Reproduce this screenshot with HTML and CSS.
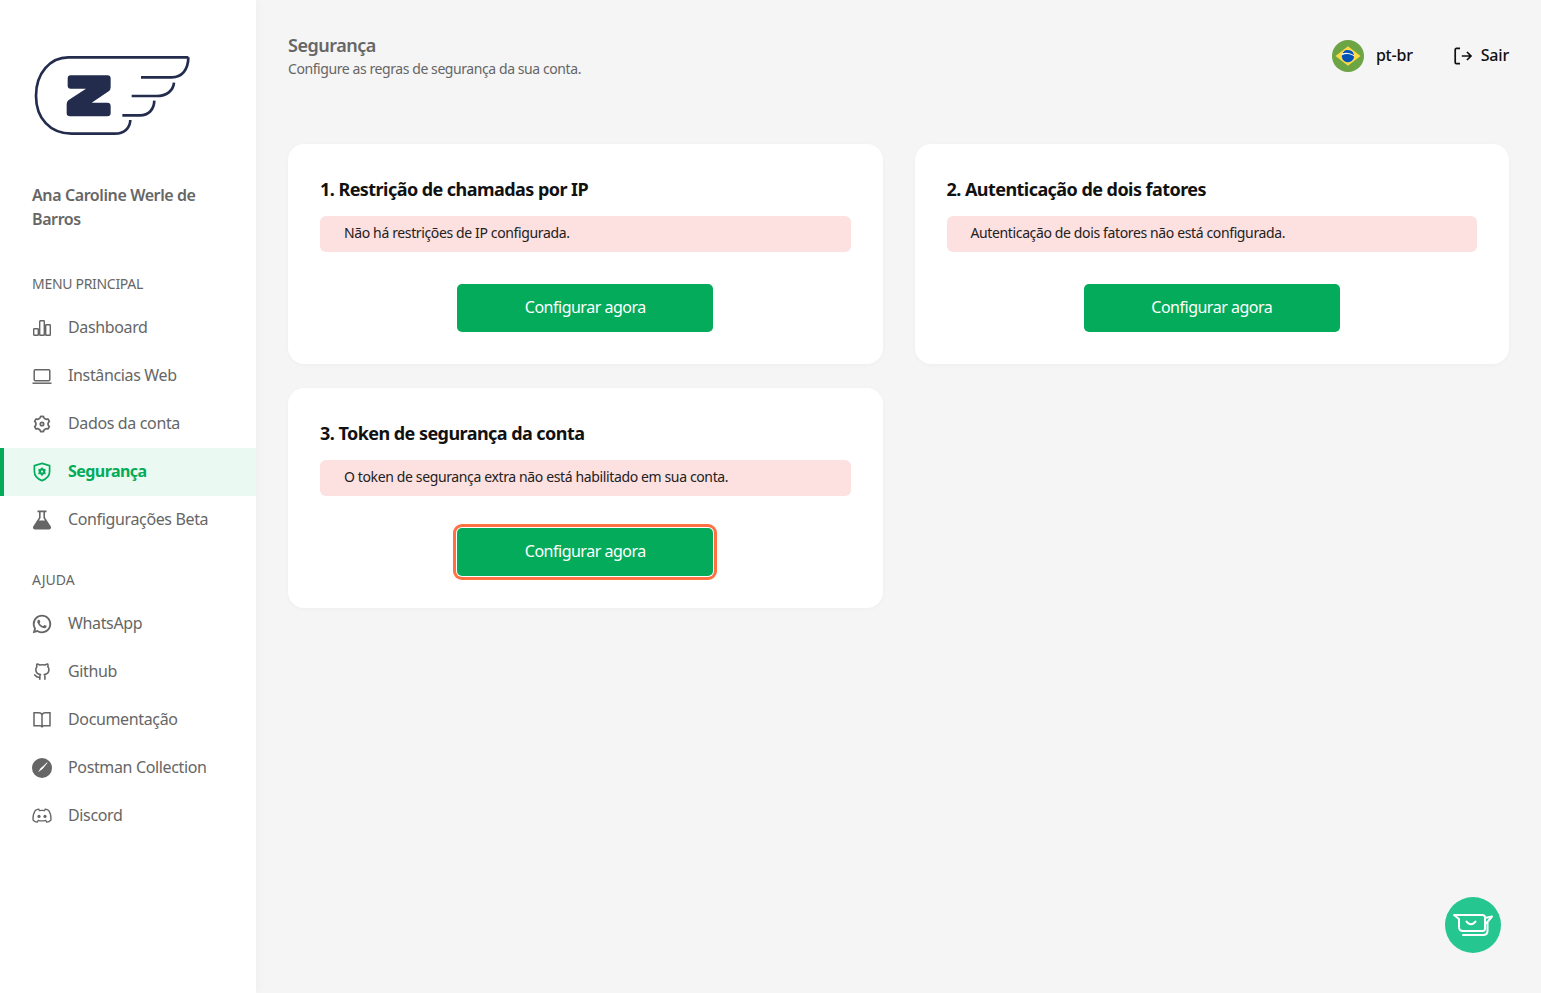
FILE: index.html
```html
<!DOCTYPE html>
<html lang="pt-br">
<head>
  <meta charset="UTF-8">
  <meta name="viewport" content="width=device-width, initial-scale=1.0">
  <title>Segurança</title>
  <link rel="stylesheet" href="styles.css">
</head>
<body>
  <aside class="sidebar">
    <svg class="logo" viewBox="0 0 768 360" fill="none" stroke="#232c4d" stroke-width="8">
      <path d="M565 82H205C150 82 108 130 108 197C108 265 150 311 215 311H345C372 311 390 295 391 270"/>
      <path d="M565 82C565 120 545 142 515 142H423"/>
      <path d="M522 158C520 182 500 198 470 198H395"/>
      <path d="M463 212C462 240 445 256 420 256H367"/>
      <path fill="#232c4d" stroke="none" d="M212 136H322Q332 136 332 146V172Q332 180 326 184L275 218H322Q332 218 332 228V250Q332 259 322 259H210Q200 259 200 250V222Q200 214 206 210L258 176H212Q203 176 203 167V146Q203 136 212 136Z"/>
    </svg>
    <p class="user-name">Ana Caroline Werle de Barros</p>

    <h4 class="menu-title">MENU PRINCIPAL</h4>
    <nav class="menu">
      <a class="menu-item">
        <svg class="icon" viewBox="-2 -2 24 24" fill="none" stroke="currentColor" stroke-width="1.4"><rect x="1.7" y="10.7" width="4.6" height="6.6" rx=".6"/><rect x="7.7" y="2.7" width="4.6" height="14.6" rx=".6"/><rect x="13.7" y="6.7" width="4.6" height="10.6" rx=".6"/></svg>
        <span>Dashboard</span>
      </a>
      <a class="menu-item">
        <svg class="icon" viewBox="-2 -2 24 24" fill="none" stroke="currentColor" stroke-width="1.5"><rect x="2.2" y="3.7" width="15.6" height="11" rx="1"/><path d="M0.5 17.2H19.5"/></svg>
        <span>Instâncias Web</span>
      </a>
      <a class="menu-item">
        <svg class="icon" viewBox="-2 -2 28 28" fill="currentColor"><path d="M3.34 17a10.018 10.018 0 0 1-.978-2.326 3 3 0 0 0 .002-5.347A9.99 9.99 0 0 1 4.865 4.99a3 3 0 0 0 4.631-2.674 9.99 9.99 0 0 1 5.007.002 3 3 0 0 0 4.632 2.672c.579.59 1.093 1.261 1.525 2.01.433.749.757 1.53.978 2.326a3 3 0 0 0-.002 5.347 9.99 9.99 0 0 1-2.501 4.337 3 3 0 0 0-4.631 2.674 9.99 9.99 0 0 1-5.007-.002 3 3 0 0 0-4.632-2.672A10.018 10.018 0 0 1 3.34 17zm5.66.196a4.993 4.993 0 0 1 2.25 2.77c.499.047 1 .048 1.499.001A4.993 4.993 0 0 1 15 17.197a4.993 4.993 0 0 1 3.525-.565c.29-.408.54-.843.748-1.298A4.993 4.993 0 0 1 18 12c0-1.26.47-2.437 1.273-3.334a8.126 8.126 0 0 0-.75-1.298A4.993 4.993 0 0 1 15 6.804a4.993 4.993 0 0 1-2.25-2.77c-.499-.047-1-.048-1.499-.001A4.993 4.993 0 0 1 9 6.803a4.993 4.993 0 0 1-3.525.565 7.99 7.99 0 0 0-.748 1.298A4.993 4.993 0 0 1 6 12c0 1.26-.47 2.437-1.273 3.334a8.126 8.126 0 0 0 .75 1.298A4.993 4.993 0 0 1 9 17.196zM12 15a3 3 0 1 1 0-6 3 3 0 0 1 0 6zm0-2a1 1 0 1 0 0-2 1 1 0 0 0 0 2z"/></svg>
        <span>Dados da conta</span>
      </a>
      <a class="menu-item active">
        <svg class="icon" viewBox="-2 -2 24 24" fill="none" stroke="currentColor" stroke-width="1.7"><path d="M10 1.4L17.6 3.6V9.5C17.6 13.6 14.4 17 10 18.6C5.6 17 2.4 13.6 2.4 9.5V3.6Z"/><circle cx="10" cy="9.6" r="2.2" stroke-width="2.2"/><path stroke-width="1.6" d="M10 5.4V7M10 12.2V13.8M6.4 7.5L7.8 8.3M12.2 10.9L13.6 11.7M6.4 11.7L7.8 10.9M12.2 8.3L13.6 7.5"/></svg>
        <span>Segurança</span>
      </a>
      <a class="menu-item">
        <svg class="icon" viewBox="-2 -2 24 24" fill="currentColor"><path d="M5.5 0.6H14.5V2.2H13V7.4L18.8 16.6C19.5 17.9 18.8 19.4 17.2 19.4H2.8C1.2 19.4 .5 17.9 1.2 16.6L7 7.4V2.2H5.5ZM8.6 2.2V7.9L7 10.4H13L11.4 7.9V2.2Z" fill-rule="evenodd"/></svg>
        <span>Configurações Beta</span>
      </a>
    </nav>

    <h4 class="menu-title help">AJUDA</h4>
    <nav class="menu">
      <a class="menu-item">
        <svg class="icon" viewBox="-1 -1 26 26" fill="currentColor"><path d="M7.253 18.494l.724.423A7.953 7.953 0 0 0 12 20a8 8 0 1 0-8-8c0 1.436.377 2.813 1.084 4.024l.422.724-.653 2.401 2.4-.655zM2.004 22l1.352-4.968A9.954 9.954 0 0 1 2 12C2 6.477 6.477 2 12 2s10 4.477 10 10-4.477 10-10 10a9.954 9.954 0 0 1-5.03-1.355L2.004 22zM8.391 7.308c.134-.01.269-.01.403-.004.054.004.108.01.162.016.159.018.334.115.393.249.298.676.588 1.357.868 2.04.062.152.025.347-.093.537a4.38 4.38 0 0 1-.263.372c-.113.145-.356.411-.356.411s-.099.118-.061.265c.014.056.06.137.102.205l.059.095c.256.427.6.86 1.02 1.268.12.116.237.235.363.346.468.413.998.75 1.57 1l.005.002c.085.037.128.057.252.11.062.026.126.049.191.066a.35.35 0 0 0 .367-.13c.724-.877.79-.934.796-.934v.002a.482.482 0 0 1 .378-.127c.06.004.121.015.177.04.531.243 1.4.622 1.4.622l.582.261c.098.047.187.158.19.265.004.067.01.175-.013.373-.032.259-.11.57-.188.733a1.155 1.155 0 0 1-.21.302 2.378 2.378 0 0 1-.33.288 3.71 3.71 0 0 1-.125.09 5.024 5.024 0 0 1-.383.22 1.99 1.99 0 0 1-.833.23c-.185.01-.37.024-.556.014-.008 0-.568-.087-.568-.087a9.448 9.448 0 0 1-3.84-2.046c-.226-.199-.435-.413-.649-.626-.89-.885-1.562-1.84-1.97-2.742A3.47 3.47 0 0 1 6.9 9.688a2.668 2.668 0 0 1 .55-1.673c.073-.094.142-.192.261-.305.127-.12.207-.184.294-.228a.961.961 0 0 1 .386-.104z"/></svg>
        <span>WhatsApp</span>
      </a>
      <a class="menu-item">
        <svg class="icon" viewBox="-4.5 -4.5 33 33" fill="none" stroke="currentColor" stroke-width="2.2" stroke-linecap="round" stroke-linejoin="round"><path d="M9 19c-5 1.5-5-2.5-7-3m14 6v-3.87a3.37 3.37 0 0 0-.94-2.61c3.14-.35 6.44-1.54 6.44-7A5.44 5.44 0 0 0 20 4.77 5.07 5.07 0 0 0 19.91 1S18.73.65 16 2.48a13.38 13.38 0 0 0-7 0C6.27.65 5.09 1 5.09 1A5.07 5.07 0 0 0 5 4.77a5.44 5.44 0 0 0-1.5 3.75c0 5.42 3.3 6.61 6.44 7A3.37 3.37 0 0 0 9 18.13V22"/></svg>
        <span>Github</span>
      </a>
      <a class="menu-item">
        <svg class="icon" viewBox="-2 -2 24 24" fill="none" stroke="currentColor" stroke-width="1.5"><path d="M10 4.8C9.4 3.5 8.6 2.8 7 2.8H2V15.8H8C9.2 15.8 10 16.6 10 17.6C10 16.6 10.8 15.8 12 15.8H18V2.8H13C11.4 2.8 10.6 3.5 10 4.8ZM10 4.8V17.6"/></svg>
        <span>Documentação</span>
      </a>
      <a class="menu-item">
        <svg class="icon" viewBox="-2 -2 24 24"><circle cx="10" cy="10" r="10" fill="currentColor"/><path d="M14.8 4.8L8.6 10.2L6 14.2L9.8 11.4Z" fill="#fff"/><path d="M15.2 4.6L10 11" stroke="#fff" stroke-width="1"/></svg>
        <span>Postman Collection</span>
      </a>
      <a class="menu-item">
        <svg class="icon" viewBox="-2 -2 24 24" fill="none" stroke="currentColor" stroke-width="1.3"><path d="M6.8 3.2C5.4 3.4 4.2 3.8 3.2 4.6C1.6 7 .8 10.4 1 14C2.2 15.2 3.6 16 5.2 16.2L6.2 14.4C8.6 15.1 11.4 15.1 13.8 14.4L14.8 16.2C16.4 16 17.8 15.2 19 14C19.2 10.4 18.4 7 16.8 4.6C15.8 3.8 14.6 3.4 13.2 3.2L12.6 4.6C11 4.3 9 4.3 7.4 4.6Z"/><circle cx="7" cy="10.4" r="1.6" fill="currentColor" stroke="none"/><circle cx="13" cy="10.4" r="1.6" fill="currentColor" stroke="none"/></svg>
        <span>Discord</span>
      </a>
    </nav>
  </aside>

  <main class="content">
    <header class="topbar">
      <div>
        <h1 class="page-title">Segurança</h1>
        <p class="page-sub">Configure as regras de segurança da sua conta.</p>
      </div>
      <div class="top-actions">
        <a class="lang">
          <svg class="flag" viewBox="0 0 32 32">
            <circle cx="16" cy="16" r="16" fill="#6da544"/>
            <path d="M16 6.3L28.5 16L16 25.7L3.5 16Z" fill="#ffda44"/>
            <circle cx="16" cy="16" r="6.2" fill="#f0f0f0"/>
            <path d="M10 15.2C9.9 15.5 9.8 16 9.8 16.2C9.8 19.6 12.6 22.2 16 22.2C19.2 22.2 21.8 19.8 22.2 16.8C19 13.6 14.4 13.2 10 15.2Z" fill="#0052b4"/>
            <path d="M13 10.4C12 11 11 12 10.4 13.2C14.6 12 18.8 12.8 22 15.2C21.8 13.6 21 12.2 20 11.2C17.8 10 15.2 9.8 13 10.4Z" fill="#0052b4"/>
          </svg>
          <span>pt-br</span>
        </a>
        <a class="logout">
          <svg class="logout-icon" viewBox="0 0 20 20" fill="none" stroke="currentColor" stroke-width="1.7"><path d="M7 2.4H3.4C2.7 2.4 2.2 2.9 2.2 3.6V16.4C2.2 17.1 2.7 17.6 3.4 17.6H7"/><path d="M8.8 10H18M14 6L18 10L14 14"/></svg>
          <span>Sair</span>
        </a>
      </div>
    </header>

    <section class="cards">
      <div class="card">
        <h2>1. Restrição de chamadas por IP</h2>
        <div class="alert">Não há restrições de IP configurada.</div>
        <button class="btn">Configurar agora</button>
      </div>
      <div class="card">
        <h2>2. Autenticação de dois fatores</h2>
        <div class="alert">Autenticação de dois fatores não está configurada.</div>
        <button class="btn">Configurar agora</button>
      </div>
      <div class="card">
        <h2>3. Token de segurança da conta</h2>
        <div class="alert">O token de segurança extra não está habilitado em sua conta.</div>
        <button class="btn focused">Configurar agora</button>
      </div>
    </section>
  </main>

  <a class="chat-btn">
    <svg viewBox="0 0 40 24" fill="none" stroke="#fff" stroke-width="2" stroke-linejoin="round" stroke-linecap="round"><path d="M1 2H29.5C31 2 32 3 32 4.5V15.5C32 17 31 18 29.5 18H10C7.5 18 6 16.5 6 14V6Z"/><path d="M32 5L39 3.5L33.5 10"/><path d="M13.5 8.5C15.5 12 20.5 12 22.5 8.5"/><path d="M10 22H30C32.5 22 34.5 20.5 34.5 18V10"/></svg>
  </a>
</body>
</html>
```

FILE: styles.css
```css
* {
  margin: 0;
  padding: 0;
  box-sizing: border-box;
}

body {
  font-family: "Noto Sans", "Open Sans", sans-serif;
  background-color: #f5f5f5;
  display: flex;
  min-height: 100vh;
  color: #666;
  font-size: 16px;
}

a {
  text-decoration: none;
  color: inherit;
}

.sidebar {
  width: 256px;
  flex-shrink: 0;
  background-color: white;
  padding-top: 30px;
  box-shadow: 0 0 12px rgba(0, 0, 0, 0.04);
}

.logo {
  display: block;
  width: 256px;
  height: 120px;
}

.user-name {
  margin: 33px 32px 0;
  font-weight: 600;
  line-height: 24px;
  letter-spacing: -0.4px;
}

.menu-title {
  margin: 43px 32px 0;
  font-size: 14px;
  font-weight: 400;
  line-height: 20px;
  letter-spacing: -0.3px;
}

.menu-title.help {
  margin-top: 26px;
  letter-spacing: 0;
}

.menu {
  margin-top: 10px;
}

.menu-item {
  display: flex;
  align-items: center;
  gap: 14px;
  height: 48px;
  padding-left: 30px;
  letter-spacing: -0.36px;
}

.menu-item span {
  margin-bottom: 2px;
}

.menu-item.active {
  color: #03ab5a;
  background-color: #eafaf2;
  border-left: 4px solid #03ab5a;
  padding-left: 26px;
  font-weight: 700;
  letter-spacing: -0.55px;
}

.icon {
  width: 24px;
  height: 24px;
  flex-shrink: 0;
}

.content {
  flex: 1;
  padding: 32px;
}

.topbar {
  display: flex;
  justify-content: space-between;
  height: 48px;
}

.page-title {
  font-size: 18px;
  font-weight: 600;
  line-height: 26px;
  letter-spacing: -0.5px;
}

.page-sub {
  margin-top: 1px;
  font-size: 14px;
  line-height: 20px;
  letter-spacing: -0.42px;
}

.top-actions {
  display: flex;
  align-items: center;
  gap: 40px;
  color: #111;
  font-weight: 500;
}

.top-actions span {
  letter-spacing: -0.2px;
  margin-bottom: 2px;
}

.lang, .logout {
  display: flex;
  align-items: center;
}

.lang {
  gap: 12px;
}

.logout {
  gap: 8px;
}

.flag {
  width: 32px;
  height: 32px;
}

.logout-icon {
  width: 20px;
  height: 20px;
}

.cards {
  display: grid;
  grid-template-columns: 1fr 1fr;
  column-gap: 32px;
  row-gap: 24px;
  margin-top: 64px;
  align-items: start;
}

.card {
  background-color: white;
  border-radius: 16px;
  padding: 32px;
  height: 220px;
  text-align: center;
  box-shadow: 0 1px 4px rgba(0, 0, 0, 0.03);
}

.card h2 {
  font-size: 18px;
  font-weight: 700;
  line-height: 26px;
  letter-spacing: -0.55px;
  color: #111;
  text-align: left;
}

.alert {
  margin-top: 14px;
  height: 36px;
  line-height: 34px;
  padding: 0 24px;
  background-color: #fde0e0;
  border-radius: 6px;
  font-size: 14px;
  letter-spacing: -0.37px;
  color: #222;
  text-align: left;
}

.btn {
  display: block;
  width: 256px;
  height: 48px;
  margin: 32px auto 0;
  padding-bottom: 2px;
  background-color: #03ab5a;
  color: white;
  border: none;
  border-radius: 5px;
  font-family: inherit;
  font-size: 16px;
  letter-spacing: -0.5px;
}

.btn.focused {
  box-shadow: 0 0 0 1px white, 0 0 0 4px #ff7043;
}

.chat-btn {
  position: fixed;
  right: 40px;
  bottom: 40px;
  width: 56px;
  height: 56px;
  border-radius: 50%;
  background-color: #25c68f;
  display: flex;
  align-items: center;
  justify-content: center;
}

.chat-btn svg {
  width: 40px;
  height: 24px;
}
```
